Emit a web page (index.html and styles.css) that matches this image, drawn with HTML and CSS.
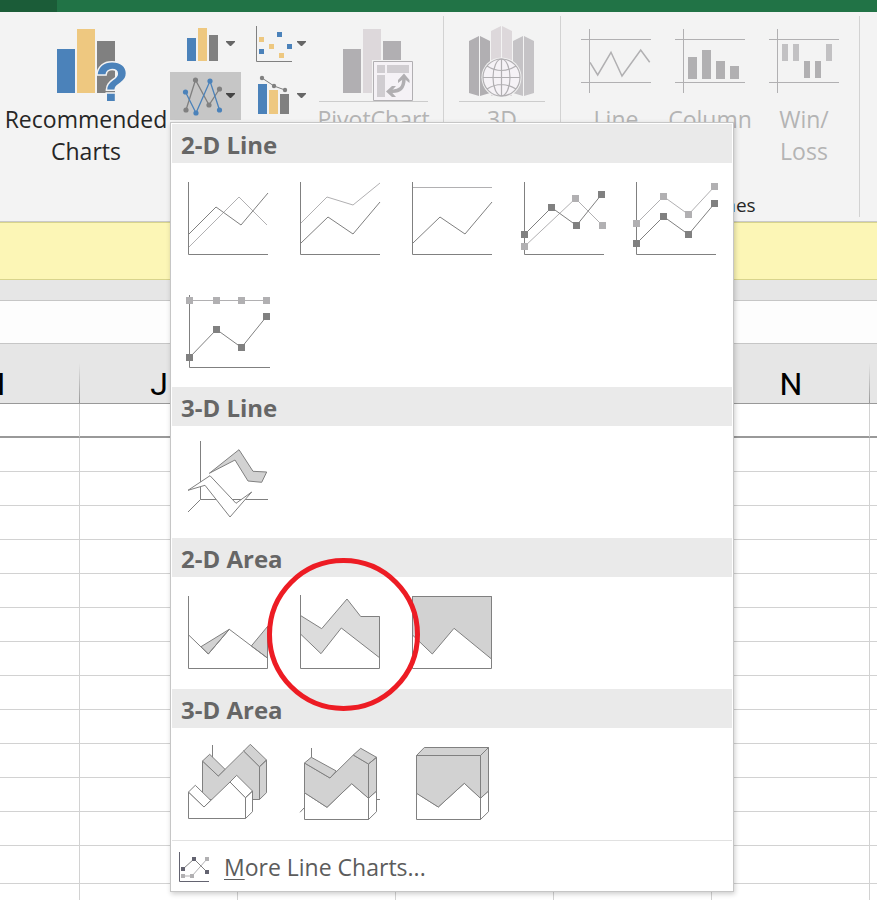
FILE: index.html
```html
<!DOCTYPE html>
<html lang="en">
<head>
  <meta charset="UTF-8" />
  <meta name="viewport" content="width=device-width, initial-scale=1.0" />
  <title>Insert Line Chart</title>
  <link rel="stylesheet" href="styles.css">
</head>
<body>
  <div class="titlebar"><div class="titlebar-tab"></div></div>

  <!-- Ribbon -->
  <div class="ribbon">
    <button class="big-button recommended">
      <svg width="72" height="75" viewBox="56 28 72 75">
        <path fill="#4b82ba" d="M57 49h18v44H57z"/>
        <path fill="#eec880" d="M77 29h18v64H77z"/>
        <path fill="#808080" d="M97 41h18v52H97z"/>
        <text class="question" x="112" y="101" text-anchor="middle">?</text>
      </svg>
      <span>Recommended Charts</span>
    </button>

    <div class="chart-buttons">
      <button class="chart-button" aria-label="Insert Column Chart">
        <svg width="71" height="48" viewBox="170 20 71 48">
          <path fill="#4b82ba" d="M187 38h9v23h-9z"/>
          <path fill="#eec880" d="M198 28h9v33h-9z"/>
          <path fill="#808080" d="M209 35h9v26h-9z"/>
          <path fill="#666" d="M226 41h9v1l-4 4h-1l-4-4z"/>
        </svg>
      </button>
      <button class="chart-button" aria-label="Insert Scatter Chart">
        <svg width="71" height="48" viewBox="241 20 71 48">
          <path fill="none" stroke="#808080" d="M256.500 26V61.500H292"/>
          <path fill="#eec880" d="M259 37h5v5h-5zM269 44h5v5h-5zM279 53h5v5h-5z"/>
          <path fill="#4b82ba" d="M277 32h5v5h-5zM287 44h5v5h-5zM259 49h5v5h-5z"/>
          <path fill="#666" d="M297 41h9v1l-4 4h-1l-4-4z"/>
        </svg>
      </button>
      <div class="chart-menu-holder">
        <button class="chart-button open" aria-label="Insert Line Chart">
          <svg width="71" height="48" viewBox="170 72 71 48">
            <path fill="none" stroke="#808080" stroke-width="1.300" d="M186 110L195.500 80L209 105L219.500 89"/>
            <path fill="none" stroke="#4b82ba" stroke-width="1.300" d="M185.500 92L196 113L210 81L219.500 110"/>
            <g fill="#808080"><circle cx="186" cy="110" r="2.600"/><circle cx="195.500" cy="80" r="2.600"/><circle cx="209" cy="105" r="2.600"/><circle cx="219.500" cy="89" r="2.600"/></g>
            <g fill="#4b82ba"><circle cx="185.500" cy="92" r="2.600"/><circle cx="196" cy="113" r="2.600"/><circle cx="210" cy="81" r="2.600"/><circle cx="219.500" cy="110" r="2.600"/></g>
            <path fill="#444" d="M226 93h9v1l-4 4h-1l-4-4z"/>
          </svg>
        </button>

        <!-- Line chart gallery -->
        <div class="menu">
          <h2>2-D Line</h2>
          <div class="gallery">
            <button class="tile" aria-label="Line">
              <svg width="112" height="112">
                <path class="axis" d="M16.500 19V91.500H96"/>
                <path class="light" d="M17 84L67 34L95 62"/>
                <path class="dark" d="M17 71L44 44L69 62L96 30"/>
              </svg>
            </button>
            <button class="tile" aria-label="Stacked Line">
              <svg width="112" height="112">
                <path class="axis" d="M16.500 19V91.500H96"/>
                <path class="light" d="M17 60L43 34L69 42L96 20"/>
                <path class="dark" d="M17 80L44 54L69 71L96 39"/>
              </svg>
            </button>
            <button class="tile" aria-label="100% Stacked Line">
              <svg width="112" height="112">
                <path class="axis" d="M16.500 19V91.500H96"/>
                <path class="light" d="M17 24.500H96"/>
                <path class="dark" d="M17 80L44 54L69 71L96 39"/>
              </svg>
            </button>
            <button class="tile" aria-label="Line with Markers">
              <svg width="112" height="112">
                <path class="axis" d="M16.500 19V91.500H96"/>
                <path class="light" d="M16.500 83.500L67.500 35.500L94.500 62.500"/>
                <path class="dark" d="M16.500 71.500L43.500 44.500L68.500 62.500L93.500 31.500"/>
                <path class="light-fill" d="M13 80h7v7h-7zM64 32h7v7h-7zM91 59h7v7h-7z"/>
                <path class="dark-fill" d="M13 68h7v7h-7zM40 41h7v7h-7zM65 59h7v7h-7zM90 28h7v7h-7z"/>
              </svg>
            </button>
            <button class="tile" aria-label="Stacked Line with Markers">
              <svg width="112" height="112">
                <path class="axis" d="M16.500 19V91.500H96"/>
                <path class="light" d="M16.500 60.500L43.500 33.500L68.500 51.500L94.500 23.500"/>
                <path class="dark" d="M16.500 80.500L43.500 53.500L68.500 71.500L94.500 40.500"/>
                <path class="light-fill" d="M13 57h7v7h-7zM40 30h7v7h-7zM65 48h7v7h-7zM91 20h7v7h-7z"/>
                <path class="dark-fill" d="M13 77h7v7h-7zM40 50h7v7h-7zM65 68h7v7h-7zM91 37h7v7h-7z"/>
              </svg>
            </button>
            <button class="tile" aria-label="100% Stacked Line with Markers">
              <svg width="112" height="112">
                <path class="axis" d="M17.500 20V92.500H98"/>
                <path class="light" d="M17.500 25.500H94.500"/>
                <path class="dark" d="M17.500 82.500L44.500 54.500L69.500 72.500L94.500 41.500"/>
                <path class="light-fill" d="M14 22h7v7h-7zM41 22h7v7h-7zM66 22h7v7h-7zM91 22h7v7h-7z"/>
                <path class="dark-fill" d="M14 79h7v7h-7zM41 51h7v7h-7zM66 69h7v7h-7zM91 38h7v7h-7z"/>
              </svg>
            </button>
          </div>

          <h2>3-D Line</h2>
          <div class="gallery">
            <button class="tile" aria-label="3-D Line">
              <svg width="112" height="112">
                <path class="axis" d="M28.500 15V73.500H96M28.500 73.500L16 86"/>
                <path class="area" d="M37.300 47.300L67 23.700L81 45.300L94.700 46L89.700 56.300L76 55L63 34z"/>
                <path class="blank" d="M16 64.300L38 49.700L64 77.300L79.700 66L58 91L33 59.300z"/>
              </svg>
            </button>
          </div>

          <h2>2-D Area</h2>
          <div class="gallery">
            <button class="tile" aria-label="Area">
              <svg width="112" height="112">
                <path class="area" d="M29 69.700L57.300 52.300L36.300 77zM79.300 69L95.500 49.500V81z"/>
                <path class="axis" d="M16.500 19V91.500H95.500V49"/>
                <path class="dark" d="M17 58.300L36.300 77L57.300 52.300L95.300 81"/>
              </svg>
            </button>
            <button class="tile circled" aria-label="Stacked Area">
              <svg width="112" height="112">
                <path class="area pale" d="M16.500 38.500L37.700 51.700L63 22L76.700 39.500H95.500V80.700L57.300 51L37 76.700L16.500 57z"/>
                <path class="axis" d="M16.500 18V91.500H95.500V39.500"/>
              </svg>
            </button>
            <button class="tile" aria-label="100% Stacked Area">
              <svg width="112" height="112">
                <path class="area" d="M16.500 19.500H95.500V82L58 51.300L36.300 77L16.500 58z"/>
                <path class="axis" d="M16.500 19.500V91.500H95.500V19.500z"/>
              </svg>
            </button>
          </div>

          <h2>3-D Area</h2>
          <div class="gallery">
            <button class="tile" aria-label="3-D Area">
              <svg width="112" height="112">
                <path class="axis" d="M40.500 17V30"/>
                <path class="area" d="M30.500 33L46.300 48L71.700 23L87.500 38.700V71.500H30.500z"/>
                <path class="area" d="M30.500 33L37.700 26.300L53 41.300L46.300 48zM71.700 23L78.300 16.300L94.500 32L87.500 38.700zM87.500 38.700L94.500 32V64.700L87.500 71.500z"/>
                <path class="blank" d="M16.500 64L32 79L58 54L73.500 69.700V90.500H16.500z"/>
                <path class="blank" d="M16.500 64L23.300 57.300L38.700 72.300L32 79zM58 54L64.700 47.300L80.500 63L73.500 69.700zM73.500 69.700L80.500 63V83.700L73.500 90.500z"/>
              </svg>
            </button>
            <button class="tile" aria-label="3-D Stacked Area">
              <svg width="112" height="112">
                <path class="axis" d="M27.500 20V30M16 84.300L20 80M92 71.500H96"/>
                <path class="blank" d="M20.500 64.700V91.500H84.500V70L67.700 55.700L43 79.300zM84.500 70L92.500 63V83.700L84.500 91.500z"/>
                <path class="area" d="M20.500 35L46 50L69.300 27L84.500 36V70.300L67.700 55.700L43 79.300L20.500 64.700z"/>
                <path class="area" d="M20.500 35L27.300 29.300L52.300 43L46 50zM69.300 27L76.700 20.300L92.500 29.300L84.500 36zM84.500 36L92.500 29.300V63L84.500 70.300z"/>
              </svg>
            </button>
            <button class="tile" aria-label="3-D 100% Stacked Area">
              <svg width="112" height="112">
                <path class="blank" d="M20.500 65V91.500H84.500V70L68.300 55.300L42.300 79zM84.500 70L92.500 63V83.700L84.500 91.500z"/>
                <path class="area" d="M20.500 27.500H84.500V70.300L68.300 55.300L42.300 79L20.500 65.300z"/>
                <path class="area" d="M20.500 27.500L28.300 19.500H92.500L84.500 27.500zM84.500 27.500L92.500 19.500V63L84.500 70.300z"/>
              </svg>
            </button>
          </div>

          <button class="more">
            <svg width="32" height="32">
              <path fill="none" stroke="#636370" d="M1.500 1V30.500H31"/>
              <path class="light" d="M5 25H14L29 8"/>
              <path class="dark" d="M5 18L16 8L29 21"/>
              <path class="light-fill" d="M3 23h4v4h-4zM12 23h4v4h-4zM27 6h4v4h-4z"/>
              <path fill="#636370" d="M3 16h4v4h-4zM14 6h4v4h-4zM27 19h4v4h-4z"/>
            </svg>
            <span><u>M</u>ore Line Charts...</span>
          </button>
        </div>
      </div>
      <button class="chart-button" aria-label="Insert Combo Chart">
        <svg width="71" height="48" viewBox="241 72 71 48">
          <path fill="#4b82ba" d="M258 84h9v30h-9z"/>
          <path fill="#eec880" d="M269 90h9v24h-9z"/>
          <path fill="#808080" d="M280 94h9v20h-9z"/>
          <path fill="none" stroke="#808080" d="M262 78L274 86L285 90"/>
          <g fill="#808080"><circle cx="262" cy="78" r="2.200"/><circle cx="274" cy="86" r="2.200"/><circle cx="285" cy="90" r="2.200"/></g>
          <path fill="#666" d="M297 93h9v1l-4 4h-1l-4-4z"/>
        </svg>
      </button>
    </div>

    <button class="big-button pivot" disabled>
      <svg width="109" height="75" viewBox="319 28 109 75">
        <path fill="#b1afb2" d="M343 49h18v44h-18zM383 41h18v20h-18z"/>
        <path fill="#ddd8db" d="M363 29h18v64h-18z"/>
        <path fill="#f3f3f3" d="M372 60h41v41h-41z"/>
        <path fill="#f5f2f6" stroke="#b1afb2" d="M373.500 61.500h39v39h-39z"/>
        <path fill="#d0cdd1" d="M377 65h8v8h-8zM387 65h22v8h-22zM377 75h8v22h-8z"/>
        <path fill="none" stroke="#b1afb2" stroke-width="3.500" d="M390 91C400 92 404 88 404 78"/>
        <path fill="#b1afb2" d="M404 73.500L409.500 80V83L404 78.500L398 83V80zM386 91.500L392 86H396L391 91.500L396 97H392z"/>
        <path stroke="#ccc" d="M319 101.500h109"/>
      </svg>
      <span>PivotChart</span>
    </button>

    <div class="separator"></div>

    <button class="big-button map" disabled>
      <svg width="86" height="75" viewBox="459 28 86 75">
        <path fill="#b1afb2" d="M469 41L479 36V96L469 93zM480 36L490 41V93L480 96z"/>
        <path fill="#ddd8db" d="M491 31L501 26V96H491zM502 26L512 31V96H502z"/>
        <path fill="#c5c3c6" d="M513 41L523 36V96L513 93zM524 36L534 41V93L524 96z"/>
        <circle cx="501.500" cy="77.500" r="20" fill="#f3f3f3"/>
        <g fill="none" stroke="#b1afb2" stroke-width="1.200">
          <circle cx="501.500" cy="77.500" r="18.500" fill="#f5f2f6"/>
          <ellipse cx="501.500" cy="77.500" rx="8.500" ry="18.500"/>
          <path d="M501.500 59V96M483 77.500H520M487 66Q501.500 75 516 66M487 89Q501.500 80 516 89"/>
        </g>
        <path stroke="#ccc" d="M459 101.500h86"/>
      </svg>
      <span>3D</span>
    </button>

    <div class="separator"></div>

    <div class="sparklines">
      <div class="sparkline-buttons">
        <button class="big-button" disabled>
          <svg width="70" height="75" viewBox="581 28 70 75">
            <path class="light" d="M589.500 29V93M581 39.500H651M581 82.500H651"/>
            <path class="light thick" d="M590 62.300L597.700 75L611 52.300L622 76L640.700 50L649.700 62.300"/>
          </svg>
          <span>Line</span>
        </button>
        <button class="big-button" disabled>
          <svg width="70" height="75" viewBox="675 28 70 75">
            <path class="light" d="M683.500 29V93M675 39.500H745M675 82.500H745"/>
            <path class="light-fill" d="M688 57h9v22h-9zM702 50h9v29h-9zM716 61h9v18h-9zM730 66h9v13h-9z"/>
          </svg>
          <span>Column</span>
        </button>
        <button class="big-button" disabled>
          <svg width="70" height="75" viewBox="769 28 70 75">
            <path class="light" d="M777.500 29V93M769 39.500H839M769 82.500H839"/>
            <path fill="#c2c1c3" d="M782 44h6v17h-6zM793 44h6v17h-6zM826 44h6v17h-6z"/>
            <path class="light-fill" d="M804 61h6v17h-6zM815 61h6v17h-6z"/>
          </svg>
          <span>Win/<br>Loss</span>
        </button>
      </div>
      <div class="group-label">Sparklines</div>
    </div>

    <div class="separator"></div>
  </div>

  <div class="message-bar"></div>
  <div class="gap-bar"></div>
  <div class="formula-bar"></div>

  <!-- Worksheet -->
  <div class="sheet">
    <table>
      <thead>
        <tr><th>I</th><th>J</th><th>K</th><th>L</th><th>M</th><th>N</th><th></th></tr>
      </thead>
      <tbody>
        <tr class="frozen"><td></td><td></td><td></td><td></td><td></td><td></td><td></td></tr>
        <tr><td></td><td></td><td></td><td></td><td></td><td></td><td></td></tr>
        <tr><td></td><td></td><td></td><td></td><td></td><td></td><td></td></tr>
        <tr><td></td><td></td><td></td><td></td><td></td><td></td><td></td></tr>
        <tr><td></td><td></td><td></td><td></td><td></td><td></td><td></td></tr>
        <tr><td></td><td></td><td></td><td></td><td></td><td></td><td></td></tr>
        <tr><td></td><td></td><td></td><td></td><td></td><td></td><td></td></tr>
        <tr><td></td><td></td><td></td><td></td><td></td><td></td><td></td></tr>
        <tr><td></td><td></td><td></td><td></td><td></td><td></td><td></td></tr>
        <tr><td></td><td></td><td></td><td></td><td></td><td></td><td></td></tr>
        <tr><td></td><td></td><td></td><td></td><td></td><td></td><td></td></tr>
        <tr><td></td><td></td><td></td><td></td><td></td><td></td><td></td></tr>
        <tr><td></td><td></td><td></td><td></td><td></td><td></td><td></td></tr>
        <tr class="tall"><td></td><td></td><td></td><td></td><td></td><td></td><td></td></tr>
        <tr><td></td><td></td><td></td><td></td><td></td><td></td><td></td></tr>
      </tbody>
    </table>
  </div>
</body>
</html>
```
FILE: styles.css
```css
*,
*::after {
  box-sizing: border-box;
}

body {
  margin: 0;
  height: 100vh;
  display: flex;
  flex-direction: column;
  overflow: hidden;
  background: #fff;
  font-family: "Open Sans", "Noto Sans", sans-serif;
  color: #262626;
}

button {
  margin: 0;
  padding: 0;
  border: none;
  background: none;
  font: inherit;
  color: inherit;
}

svg {
  display: block;
  overflow: visible;
}

.titlebar {
  flex: none;
  height: 12px;
  background: #217346;
}

.titlebar-tab {
  width: 57px;
  height: 12px;
  background: #1b5c38;
}

/* Ribbon */
.ribbon {
  flex: none;
  display: flex;
  height: 210px;
  padding: 4px 0;
  background: #f3f3f3;
  border-bottom: 1px solid #cacaca;
}

.big-button {
  flex: none;
  display: flex;
  flex-direction: column;
  align-items: center;
  padding-top: 12px;
  font-size: 23px;
  line-height: 32px;
}

.big-button:disabled {
  color: #b4b4b4;
}

.recommended {
  width: 170px;
  padding-left: 2px;
}

.recommended svg {
  margin-left: 12px;
}

.question {
  font-family: "Liberation Sans", sans-serif;
  font-size: 55px;
  font-weight: bold;
  fill: #4b82ba;
  stroke: #f3f3f3;
  stroke-width: 3px;
  paint-order: stroke;
}

.chart-buttons {
  flex: none;
  display: grid;
  grid-template-columns: 71px 71px;
  grid-template-rows: 48px 48px;
  gap: 4px 0;
  padding-top: 4px;
}

.chart-button {
  display: block;
}

.chart-button.open {
  background: #c6c6c6;
}

.pivot {
  width: 109px;
  margin: 0 15px 0 7px;
}

.map {
  width: 86px;
  margin: 0 15px;
}

.separator {
  flex: none;
  width: 1px;
  background: #d2d2d2;
}

.sparklines {
  flex: none;
  display: flex;
  flex-direction: column;
  justify-content: space-between;
  padding: 0 8px;
}

.sparkline-buttons {
  display: grid;
  grid-template-columns: repeat(3, 94px);
  align-items: start;
}

.group-label {
  text-align: center;
  font-size: 19px;
  line-height: 24px;
}

/* Drop-down gallery */
.chart-menu-holder {
  position: relative;
}

.menu {
  position: absolute;
  z-index: 10;
  top: 50px;
  left: 0;
  width: 564px;
  padding: 1px;
  background: #fff;
  border: 1px solid #c6c6c6;
  box-shadow: 1px 2px 5px rgba(0, 0, 0, 0.2);
}

.menu h2 {
  margin: 0;
  padding: 2px 9px 0;
  background: #eaeaea;
  color: #666;
  font-size: 24px;
  font-weight: bold;
  line-height: 37px;
}

.gallery {
  display: grid;
  grid-template-columns: repeat(5, 112px);
  grid-auto-rows: 112px;
}

.tile {
  position: relative;
}

.circled::after {
  content: "";
  position: absolute;
  z-index: 1;
  top: -19px;
  left: -17px;
  width: 153px;
  height: 153px;
  border: 5px solid #ed1c24;
  border-radius: 50%;
}

.axis {
  fill: none;
  stroke: #808080;
}

.dark {
  fill: none;
  stroke: #808080;
}

.light {
  fill: none;
  stroke: #b1b0b2;
}

.thick {
  stroke-width: 1.5px;
}

.dark-fill {
  fill: #808080;
}

.light-fill {
  fill: #b1b0b2;
}

.area {
  fill: #d2d2d2;
  stroke: #808080;
}

.pale {
  fill: #dcdcdc;
}

.blank {
  fill: #fff;
  stroke: #808080;
}

.more {
  display: flex;
  align-items: center;
  gap: 14px;
  width: 100%;
  height: 50px;
  padding: 2px 6px 0;
  border-top: 1px solid #e1e1e1;
  color: #5c5c5c;
  font-size: 23px;
  line-height: 32px;
}

.more u {
  text-underline-offset: 3px;
  text-decoration-thickness: 1px;
}

/* Bars between the ribbon and the sheet */
.message-bar {
  flex: none;
  height: 58px;
  background: #fcf6b6;
  border-top: 1px solid #d8d48c;
  border-bottom: 1px solid #d8d48c;
}

.gap-bar {
  flex: none;
  height: 20px;
  background: #e6e6e6;
}

.formula-bar {
  flex: none;
  height: 44px;
  background: #fdfdfd;
  border-top: 1px solid #c6c6c6;
  border-bottom: 1px solid #c6c6c6;
}

/* Worksheet */
.sheet {
  flex: 1;
  min-height: 0;
  overflow: hidden;
  background: #e6e6e6;
}

.sheet table {
  width: 1106px;
  margin-left: -78px;
  table-layout: fixed;
  border-collapse: separate;
  border-spacing: 0;
}

.sheet th {
  height: 60px;
  padding: 22px 0 0;
  border-bottom: 1px solid #999;
  background: linear-gradient(#e6e6e6, #999) right bottom / 1px 40px no-repeat #e6e6e6;
  color: #000;
  font-family: Roboto, sans-serif;
  font-size: 32px;
  font-weight: normal;
  line-height: 37px;
}

.sheet td {
  height: 34px;
  padding: 0;
  background: #fff;
  border-right: 1px solid #d2d2d2;
  border-bottom: 1px solid #d2d2d2;
}

.sheet .frozen td {
  border-bottom: 2px solid #999;
}

.sheet .tall td {
  height: 38px;
}
```
